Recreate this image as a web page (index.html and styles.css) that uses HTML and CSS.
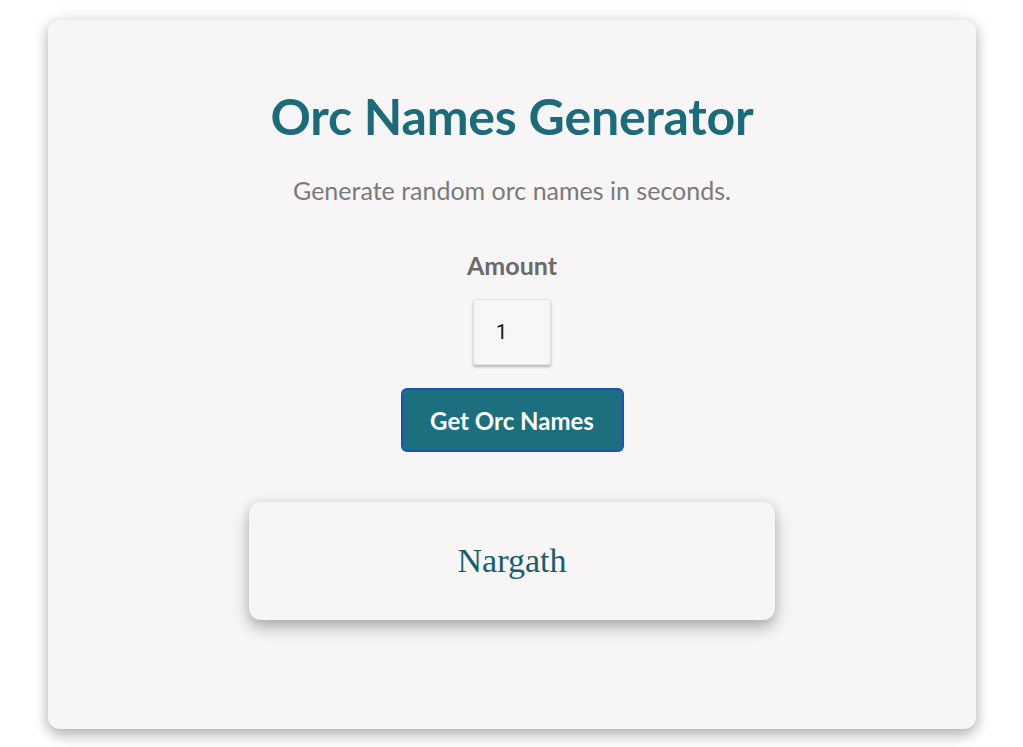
FILE: index.html
```html
<!DOCTYPE html>
<html lang="en">
<head>
<meta charset="utf-8">
<title>Orc Names Generator</title>
<link rel="stylesheet" href="styles.css">
</head>
<body>
<main class="card">
  <h1 class="title">Orc Names Generator</h1>
  <p class="subtitle">Generate random orc names in seconds.</p>
  <label class="label" for="amount">Amount</label>
  <input class="amount" id="amount" type="text" value="1">
  <button class="btn" type="button">Get Orc Names</button>
  <section class="result">
    <span class="name">Nargath</span>
  </section>
</main>
</body>
</html>
```
FILE: styles.css
```css
html, body {
  margin: 0;
  padding: 0;
  background: #ffffff;
}
body {
  padding: 20px 47px 18px 48px;
  font-family: "Lato", "Open Sans", sans-serif;
}
.card {
  box-sizing: border-box;
  height: 709px;
  background: #f7f5f6;
  border-radius: 12px;
  box-shadow: 0 6px 14px rgba(0,0,0,0.28), 0 0 18px rgba(0,0,0,0.08);
  display: flex;
  flex-direction: column;
  align-items: center;
  padding-top: 64px;
}
.title {
  margin: 0;
  font-size: 50px;
  line-height: 64px;
  font-weight: 700;
  color: #1b6b7b;
  letter-spacing: -0.2px;
}
.subtitle {
  margin: 27px 0 0;
  font-size: 25px;
  line-height: 30px;
  color: #7a7a7a;
}
.label {
  margin-top: 45px;
  font-size: 25px;
  line-height: 30px;
  font-weight: 700;
  color: #6a6a6a;
}
.amount {
  box-sizing: border-box;
  margin-top: 19px;
  width: 78px;
  height: 66px;
  border: 1px solid #e2e0e0;
  border-radius: 3px;
  background: #f8f7f7;
  box-shadow: 0 2px 3px rgba(0,0,0,0.25);
  padding: 0 0 0 22px;
  font-family: "Roboto", sans-serif;
  font-size: 20px;
  color: #111;
  outline: none;
}
.btn {
  box-sizing: border-box;
  margin-top: 23px;
  width: 223px;
  height: 64px;
  background: #1b6f7e;
  border: 2px solid #1a52b8;
  border-radius: 6px;
  color: #ffffff;
  font-family: "Lato", sans-serif;
  font-size: 24px;
  font-weight: 700;
  cursor: pointer;
}
.result {
  box-sizing: border-box;
  margin-top: 50px;
  width: 526px;
  height: 118px;
  background: #f7f5f6;
  border-radius: 12px;
  box-shadow: 0 7px 16px rgba(0,0,0,0.3), 0 0 10px rgba(0,0,0,0.06);
  display: flex;
  align-items: center;
  justify-content: center;
}
.name {
  font-family: "Liberation Serif", "Times New Roman", serif;
  font-size: 34px;
  color: #16606e;
}
```
